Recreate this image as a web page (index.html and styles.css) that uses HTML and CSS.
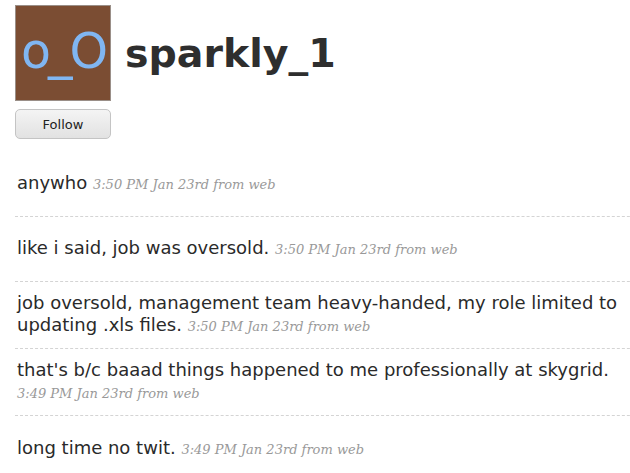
FILE: index.html
```html
<!DOCTYPE html>
<html lang="en">

<head>
  <meta charset="utf8">
  <title>sparkly_1</title>
  <link rel="stylesheet" href="styles.css">
</head>

<body>
  <div class="page">
    <div class="profile">
      <div class="profile-side">
        <div class="avatar">o_O</div>
        <button class="follow">Follow</button>
      </div>
      <h1 class="screen-name">sparkly_1</h1>
    </div>

    <ol class="timeline">
      <li class="status">
        <p>anywho <span class="meta">3:50 PM Jan 23rd from web</span></p>
      </li>
      <li class="status">
        <p>like i said, job was oversold. <span class="meta">3:50 PM Jan 23rd from web</span></p>
      </li>
      <li class="status">
        <p>job oversold, management team heavy-handed, my role limited to updating .xls files. <span class="meta">3:50 PM Jan 23rd from web</span></p>
      </li>
      <li class="status">
        <p>that's b/c baaad things happened to me professionally at skygrid. <span class="meta">3:49 PM Jan 23rd from web</span></p>
      </li>
      <li class="status">
        <p>long time no twit. <span class="meta">3:49 PM Jan 23rd from web</span></p>
      </li>
    </ol>
  </div>
</body>

</html>
```

FILE: styles.css
```css
html,
body {
  margin: 0;
  overflow: hidden;
  background: #fff;
}

body {
  font-family: 'DejaVu Sans', 'Liberation Sans', sans-serif;
  color: #2a2a2a;
}

.page {
  width: 660px;
  padding: 5px 0 0 15px;
}

.profile {
  display: flex;
  align-items: flex-start;
}

.profile-side {
  display: flex;
  flex-direction: column;
  gap: 8px;
  width: 96px;
}

.avatar {
  box-sizing: border-box;
  height: 96px;
  border: 1px solid #9a8f88;
  background-color: #7b4d33;
  color: #80b6f2;
  font-size: 49px;
  line-height: 92px;
  text-align: center;
  letter-spacing: -3px;
}

.follow {
  height: 30px;
  border: 1px solid #c4c4c4;
  border-radius: 5px;
  background: linear-gradient(#f4f4f4, #e2e2e2);
  font-family: inherit;
  font-size: 13px;
  color: #222;
  cursor: pointer;
}

.screen-name {
  margin: 0 0 0 14px;
  height: 96px;
  line-height: 96px;
  font-size: 39.5px;
  font-weight: bold;
  color: #2e2e2e;
}

.timeline {
  list-style: none;
  margin: 13px 0 0;
  padding: 0;
}

.status {
  box-sizing: border-box;
  display: flex;
  align-items: center;
  min-height: 65px;
  padding: 10px 0;
  border-bottom: 1px dashed #d4d4d4;
}

.status:last-child {
  border-bottom: none;
}

.status p {
  margin: 0;
  width: 640px;
  padding-left: 2px;
  font-size: 18px;
  line-height: 22px;
}

.meta {
  font-family: 'DejaVu Serif', 'Liberation Serif', serif;
  font-style: italic;
  font-size: 13px;
  color: #999;
  white-space: nowrap;
}
```
